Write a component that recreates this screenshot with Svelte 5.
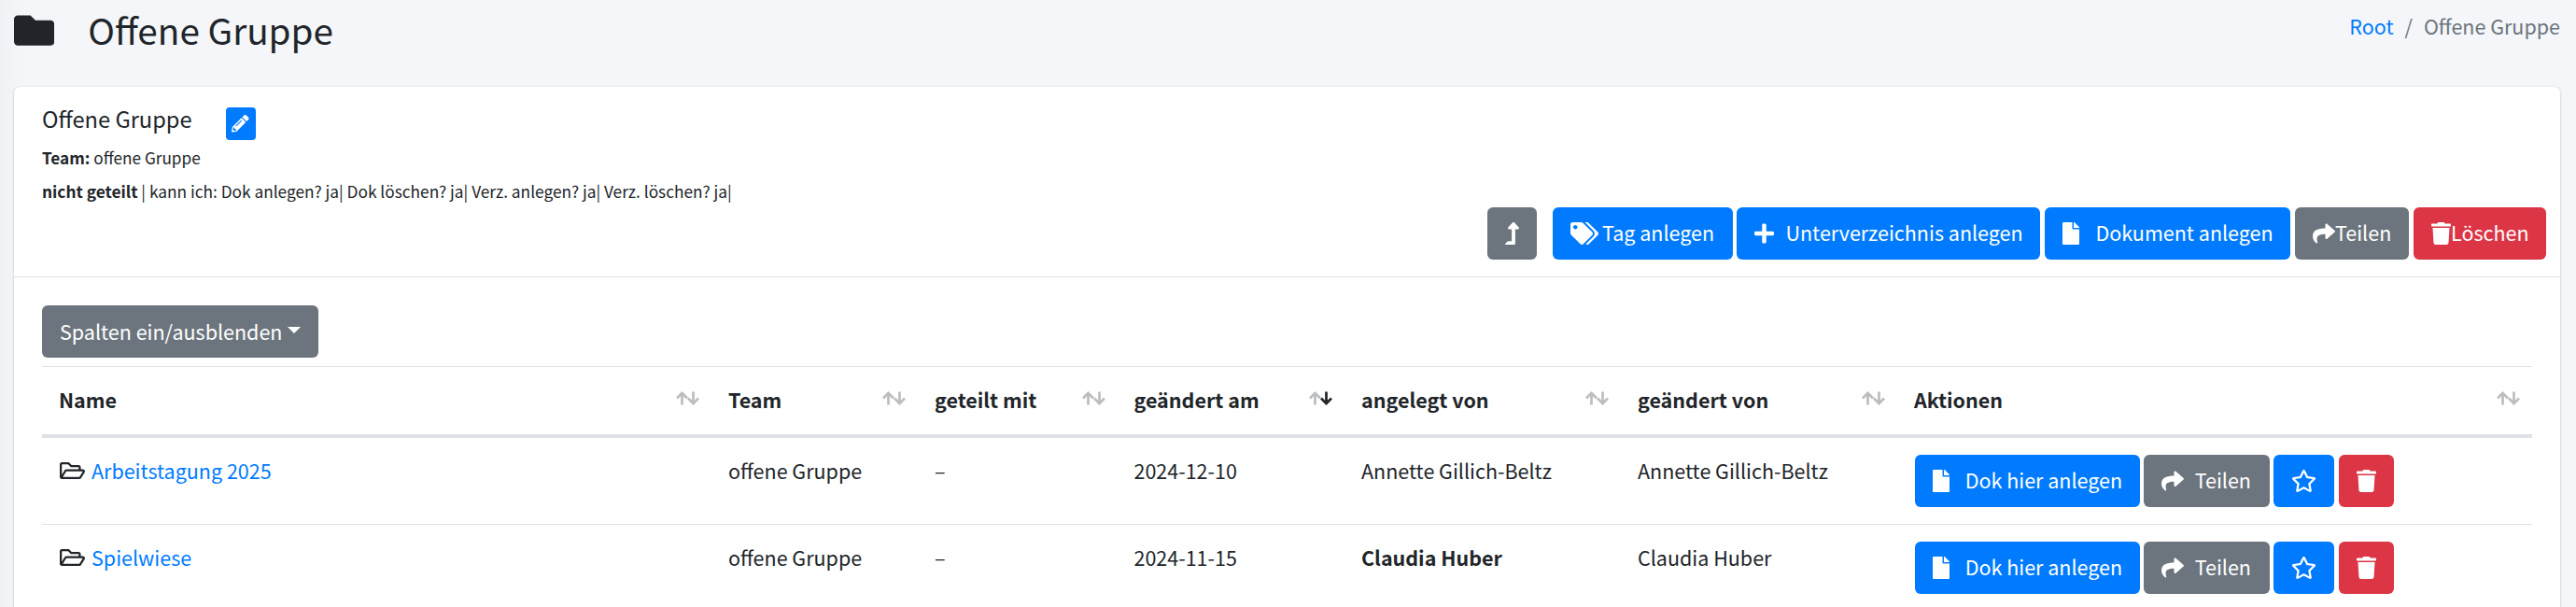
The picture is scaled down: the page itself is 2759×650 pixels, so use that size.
<script>
  const icons = {
    folder: [512, 'M464 128H272l-64-64H48C21.49 64 0 85.49 0 112v288c0 26.51 21.49 48 48 48h416c26.51 0 48-21.49 48-48V176c0-26.51-21.49-48-48-48z'],
    file: [384, 'M224 136V0H24C10.7 0 0 10.7 0 24v464c0 13.3 10.7 24 24 24h336c13.3 0 24-10.7 24-24V160H248c-13.2 0-24-10.8-24-24zm160-14.1v6.1H256V0h6.1c6.4 0 12.5 2.5 17 7l97.9 98c4.5 4.5 7 10.6 7 16.9z'],
    plus: [448, 'M416 208H272V64c0-17.67-14.33-32-32-32h-32c-17.67 0-32 14.33-32 32v144H32c-17.67 0-32 14.33-32 32v32c0 17.67 14.33 32 32 32h144v144c0 17.67 14.33 32 32 32h32c17.67 0 32-14.33 32-32V304h144c17.67 0 32-14.33 32-32v-32c0-17.67-14.33-32-32-32z'],
    trash: [448, 'M432 32H312l-9.4-18.7A24 24 0 0 0 281.1 0H166.8a23.72 23.72 0 0 0-21.4 13.3L136 32H16A16 16 0 0 0 0 48v32a16 16 0 0 0 16 16h416a16 16 0 0 0 16-16V48a16 16 0 0 0-16-16zM32 128l21.2 339a48 48 0 0 0 47.9 45h245.8a48 48 0 0 0 47.9-45L416 128z'],
    share: [512, 'M503.691 189.836L327.687 37.851C312.281 24.546 288 35.347 288 56.015v80.053C127.371 137.907 0 170.1 0 322.326c0 61.441 39.581 122.309 83.333 154.132 13.653 9.931 33.111-2.533 28.077-18.631C66.066 312.814 132.917 274.316 288 272.085V360c0 20.7 24.3 31.453 39.687 18.164l176.004-152c11.071-9.562 11.086-26.753 0-36.328z'],
    tags: [640, 'M497.941 225.941L286.059 14.059A48 48 0 0 0 252.118 0H48C21.49 0 0 21.49 0 48v204.118a48 48 0 0 0 14.059 33.941l211.882 211.882c18.744 18.745 49.136 18.746 67.882 0l204.118-204.118c18.745-18.745 18.745-49.137 0-67.882zM112 160c-26.51 0-48-21.49-48-48s21.49-48 48-48 48 21.49 48 48-21.49 48-48 48zm513.941 133.823L421.823 497.941c-18.745 18.745-49.137 18.745-67.882 0l-.36-.36L527.64 323.522c16.999-16.999 26.36-39.6 26.36-63.64s-9.362-46.641-26.36-63.64L331.397 0h48.721a48 48 0 0 1 33.941 14.059l211.882 211.882c18.745 18.745 18.745 49.137 0 67.882z'],
    star: [576, 'M528.1 171.5L382 150.2 316.7 17.8c-11.7-23.6-45.6-23.9-57.4 0L194 150.2 47.9 171.5c-26.2 3.8-36.7 36.1-17.7 54.6l105.7 103-25 145.5c-4.5 26.3 23.2 46 46.4 33.7L288 439.6l130.7 68.7c23.2 12.2 50.9-7.4 46.4-33.7l-25-145.5 105.7-103c19-18.5 8.5-50.8-17.7-54.6zM388.6 312.3l23.7 138.4L288 385.4l-124.3 65.3 23.7-138.4-100.6-98 139-20.2 62.2-126 62.2 126 139 20.2-100.6 98z'],
    open: [576, 'M527.9 224H480v-48c0-26.5-21.5-48-48-48H272l-64-64H48C21.5 64 0 85.5 0 112v288c0 26.5 21.5 48 48 48h400c16.5 0 31.9-8.5 40.7-22.6l79.9-128c20-31.9-3-73.4-40.7-73.4zM48 118c0-3.3 2.7-6 6-6h134.1l64 64H426c3.3 0 6 2.7 6 6v42H152c-16.8 0-32.4 8.8-41.1 23.2L48 351.4zm400 282H72l77.2-128H528z'],
    up: [320, 'M313.553 119.669L209.587 7.666c-9.485-10.214-25.676-10.229-35.174 0L70.438 119.669C56.232 134.969 67.062 160 88.025 160H152v272H68.024a11.996 11.996 0 0 0-8.485 3.515l-56 56C-4.021 499.074 1.333 512 12.024 512H208c13.255 0 24-10.745 24-24V160h63.966c20.878 0 31.851-24.969 17.587-40.331z'],
    pencil: [512, 'M497.9 142.1l-46.1 46.1c-4.7 4.7-12.3 4.7-17 0l-111-111c-4.7-4.7-4.7-12.3 0-17l46.1-46.1c18.7-18.7 49.1-18.7 67.9 0l60.1 60.1c18.8 18.7 18.8 49.1 0 67.9zM284.2 99.8L21.6 362.4.4 483.9c-2.9 16.4 11.4 30.6 27.8 27.8l121.5-21.3 262.6-262.6c4.7-4.7 4.7-12.3 0-17l-111-111c-4.8-4.7-12.4-4.7-17.1 0zM124.1 339.9c-5.5-5.5-5.5-14.3 0-19.8l154-154c5.5-5.5 14.3-5.5 19.8 0s5.5 14.3 0 19.8l-154 154c-5.5 5.5-14.3 5.5-19.8 0zM88 424h48v36.3l-64.5 11.3-31.1-31.1L51.7 376H88v48z'],
  };
  const columns = ['Name', 'Team', 'geteilt mit', 'geändert am', 'angelegt von', 'geändert von', 'Aktionen'];
  const rows = [
    { name: 'Arbeitstagung 2025', date: '2024-12-10', by: 'Annette Gillich-Beltz', own: false },
    { name: 'Spielwiese', date: '2024-11-15', by: 'Claudia Huber', own: true },
  ];
</script>

{#snippet icon(name, h = 24)}
  <svg class="icon" viewBox="0 0 {icons[name][0]} 512" width={(icons[name][0] / 512) * h} height={h}><path d={icons[name][1]} /></svg>
{/snippet}

<div class="page">
  <header>
    <h1>{@render icon('folder', 43.2)}<span>Offene Gruppe</span></h1>
    <nav><a href="#root">Root</a><i>/</i><span>Offene Gruppe</span></nav>
  </header>

  <main class="card">
    <section class="head">
      <div class="title"><span>Offene Gruppe</span><button class="edit">{@render icon('pencil', 18.5)}</button></div>
      <p class="team"><b>Team:</b> offene Gruppe</p>
      <p class="rights"><b>nicht geteilt</b> | kann ich: Dok anlegen? ja| Dok löschen? ja| Verz. anlegen? ja| Verz. löschen? ja|</p>
      <div class="tools">
        <button class="btn gray level">{@render icon('up')}</button>
        <button class="btn blue tag">{@render icon('tags')}<span>Tag anlegen</span></button>
        <button class="btn blue sub">{@render icon('plus')}<span>Unterverzeichnis anlegen</span></button>
        <button class="btn blue doc">{@render icon('file')}<span>Dokument anlegen</span></button>
        <button class="btn gray share">{@render icon('share')}<span>Teilen</span></button>
        <button class="btn red del">{@render icon('trash')}<span>Löschen</span></button>
      </div>
    </section>

    <section class="body">
      <button class="btn gray toggle"><span>Spalten ein/ausblenden</span><i class="caret"></i></button>
      <div class="table">
        <div class="row thead">
          {#each columns as c}
            <div class="cell">
              <span>{c}</span>
              <svg class="sort" class:desc={c === 'geändert am'} width="25" height="15" viewBox="0 0 25 15">
                <path class="asc-arrow" d="M6.5 14.5V1.8M1 7.5L6.5 1.9L12 7.5" />
                <path class="desc-arrow" d="M18.5 .5V13.2M13 7.5L18.5 13.1L24 7.5" />
              </svg>
            </div>
          {/each}
        </div>
        {#each rows as r}
          <div class="row">
            <div class="cell name">{@render icon('open')}<a href="#dir">{r.name}</a></div>
            <div class="cell">offene Gruppe</div>
            <div class="cell">–</div>
            <div class="cell">{r.date}</div>
            <div class="cell" class:own={r.own}>{r.by}</div>
            <div class="cell">{r.by}</div>
            <div class="cell actions">
              <button class="btn blue new">{@render icon('file')}<span>Dok hier anlegen</span></button>
              <button class="btn gray send">{@render icon('share')}<span>Teilen</span></button>
              <button class="btn blue fav">{@render icon('star')}</button>
              <button class="btn red rm">{@render icon('trash')}</button>
            </div>
          </div>
        {/each}
      </div>
    </section>
  </main>
</div>

<style>
  :global(body) { background: #f4f6f9; overflow: hidden; }
  .page {
    box-sizing: border-box; height: 650px; overflow: hidden; padding: 0 17px 0 15px;
    font: 21.5px/36px "Noto Sans CJK SC", "Noto Sans", sans-serif; color: #212529;
    background: linear-gradient(90deg, #f0f1f5, #f4f6f9 22px);
  }
  button { font: inherit; border: 0; margin: 0; padding: 0; color: #fff; }
  .icon { fill: currentColor; flex: none; display: block; }
  a { color: #007bff; text-decoration: none; }
  b { font-weight: 700; }
  header { display: flex; justify-content: space-between; height: 93px; }
  h1 { display: flex; margin: 7px 0 0; height: 48px; font-size: 38.7px; line-height: 48px; font-weight: 400; }
  h1 .icon { margin-top: 3.5px; }
  h1 span { margin-left: 36px; }
  nav { display: flex; margin-top: 10px; color: #6c757d; }
  nav i { font-style: normal; margin: 0 12px; }
  .card { background: #fff; border-radius: 6px; box-shadow: 0 0 1px rgba(0,0,0,.125), 0 1px 3px rgba(0,0,0,.2); height: 700px; }
  .head { box-sizing: border-box; height: 204px; padding: 17px 15px 0 30px; border-bottom: 1px solid #dfdfdf; }
  .title { display: flex; height: 44px; font-size: 23.65px; line-height: 34px; }
  .edit { margin: 5px 0 0 36px; width: 32px; height: 35px; border-radius: 4px; background: #007bff; display: flex; align-items: center; justify-content: center; }
  p { margin: 0; font-size: 17.2px; line-height: 30px; }
  .rights { margin-top: 6px; font-size: 17.3px; }
  .tools { display: flex; justify-content: flex-end; margin-top: 2px; }
  .btn { box-sizing: border-box; display: flex; align-items: center; height: 56px; border-radius: 6px; flex: none; padding: 0 0 0 19px; white-space: nowrap; }
  .btn .icon { margin-top: -1px; }
  .btn span { margin-top: -2px; }
  .blue { background: #007bff; }
  .gray { background: #6c757d; }
  .red { background: #dc3545; }
  .level { width: 53px; margin-right: 17px; }
  .tag { width: 193.5px; margin-right: 4px; }
  .tag span { margin-left: 4.5px; }
  .sub { width: 325px; margin-right: 5px; }
  .sub span { margin-left: 12.5px; }
  .doc { width: 263px; margin-right: 5px; }
  .doc span { margin-left: 17.5px; }
  .share { width: 122px; margin-right: 5px; }
  .del { width: 142px; }
  .body { padding: 30px 30px 0; }
  .toggle { width: 296px; }
  .toggle span { margin-top: -1px; }
  .caret { margin-left: 6px; margin-top: -3px; border: 7.2px solid transparent; border-top-color: #fff; border-bottom: 0; }
  .table { margin-top: 9px; }
  .row { box-sizing: border-box; display: grid; grid-template-columns: 717px 221px 213.5px 243.5px 296px 296px 1fr; height: 93px; border-top: 1px solid #dee2e6; padding-top: 17px; }
  .thead { height: 76px; border-bottom: 3px solid #dee2e6; font-weight: 700; }
  .cell { display: flex; padding-left: 18px; min-width: 0; }
  .thead .cell { justify-content: space-between; padding-right: 13px; }
  .sort { margin-top: 9px; fill: none; stroke: #bcbdbe; stroke-width: 2.7; }
  .desc .desc-arrow { stroke: #212529; }
  .name { padding-left: 19px; }
  .name .icon { margin: 6px 7px 0 0; }
  .own { font-weight: 700; }
  .actions { padding: 1px 0 0 18.7px; }
  .new { width: 241px; margin-right: 4px; }
  .new span { margin-left: 17px; }
  .send { width: 135px; margin-right: 4.5px; }
  .send span { margin-left: 12px; }
  .fav { width: 64.5px; margin-right: 5px; }
  .rm { width: 59px; }
</style>
